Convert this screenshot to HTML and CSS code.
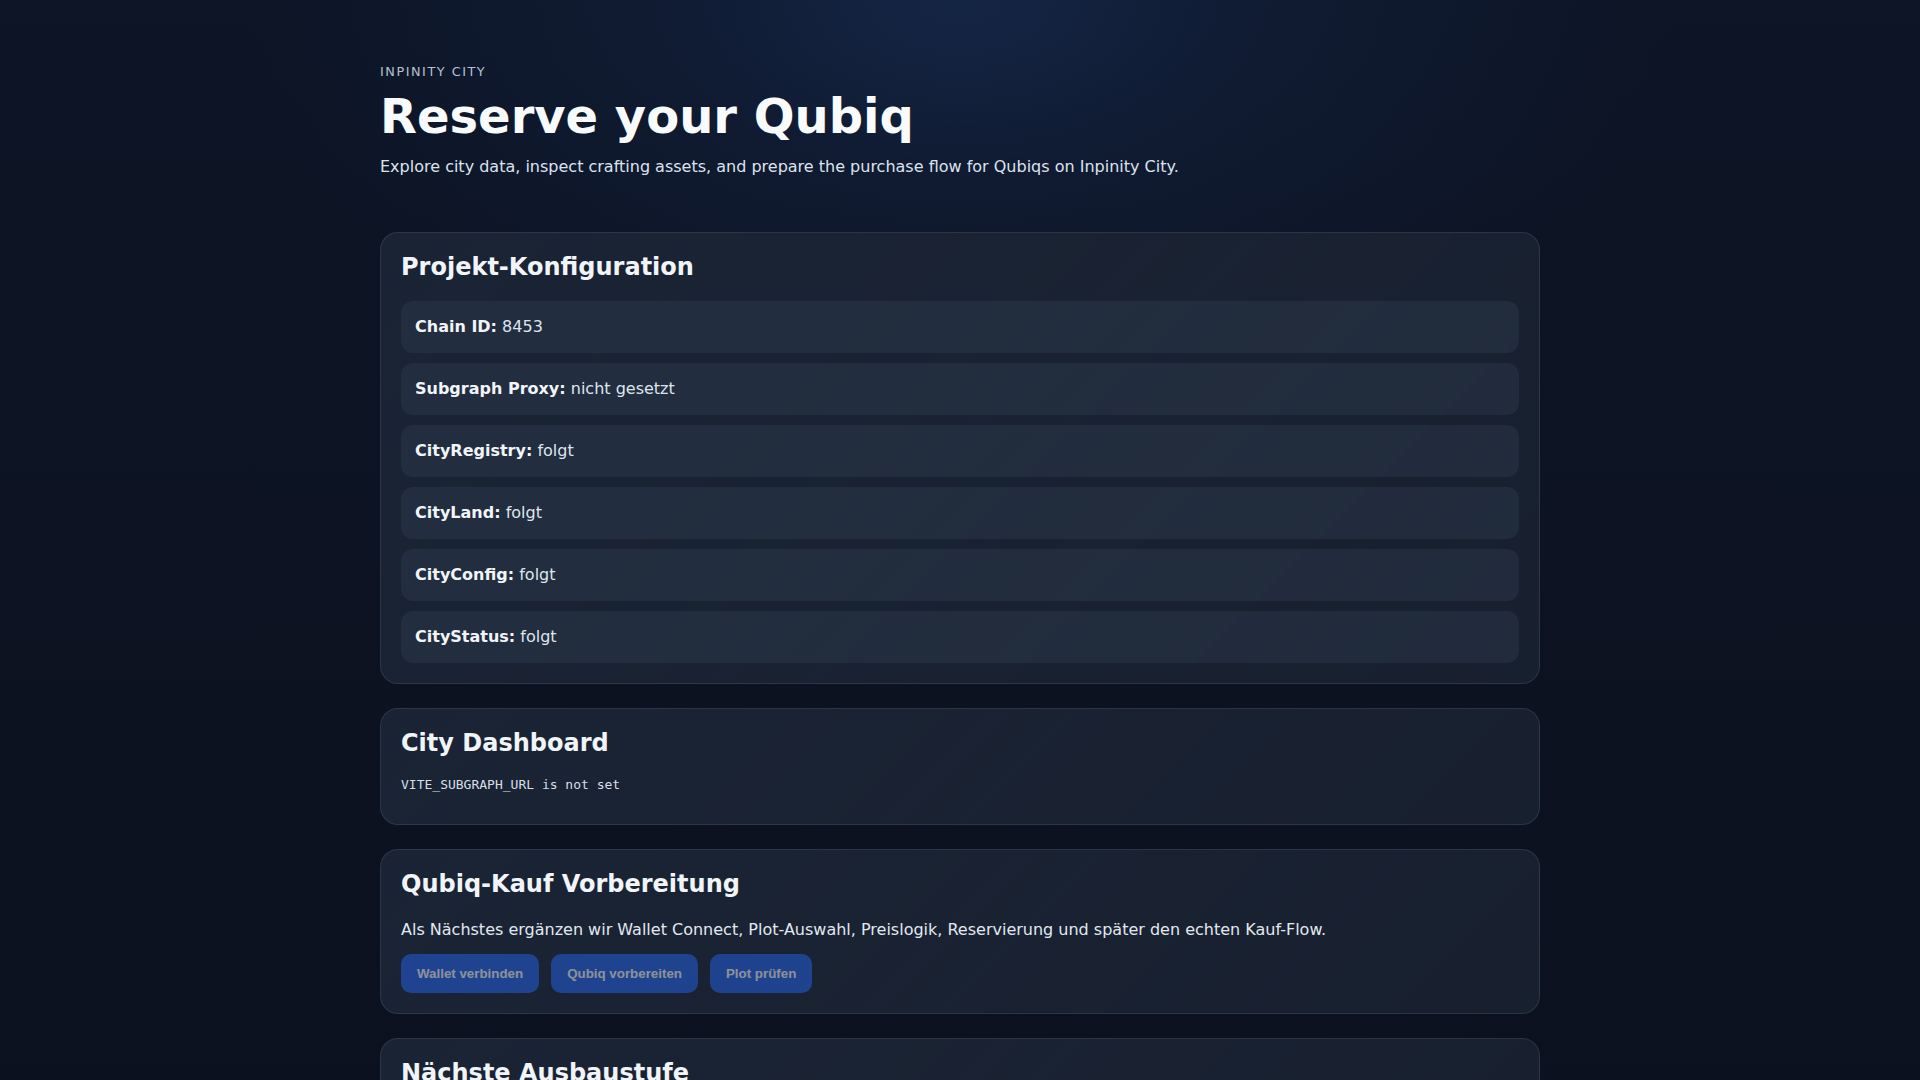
FILE: index.html
```html
<!DOCTYPE html>
<html lang="de">
<head>
<meta charset="utf-8">
<title>Inpinity City – Reserve your Qubiq</title>
<link rel="stylesheet" href="styles.css">
</head>
<body>
<main class="page">
  <header class="hero">
    <p class="eyebrow">INPINITY CITY</p>
    <h1 class="title">Reserve your Qubiq</h1>
    <p class="lead">Explore city data, inspect crafting assets, and prepare the purchase flow for Qubiqs on Inpinity City.</p>
  </header>

  <section class="card">
    <h2 class="card-title">Projekt-Konfiguration</h2>
    <ul class="config-list">
      <li class="config-row"><strong>Chain ID:</strong> 8453</li>
      <li class="config-row"><strong>Subgraph Proxy:</strong> nicht gesetzt</li>
      <li class="config-row"><strong>CityRegistry:</strong> folgt</li>
      <li class="config-row"><strong>CityLand:</strong> folgt</li>
      <li class="config-row"><strong>CityConfig:</strong> folgt</li>
      <li class="config-row"><strong>CityStatus:</strong> folgt</li>
    </ul>
  </section>

  <section class="card">
    <h2 class="card-title">City Dashboard</h2>
    <pre class="mono-note">VITE_SUBGRAPH_URL is not set</pre>
  </section>

  <section class="card">
    <h2 class="card-title">Qubiq-Kauf Vorbereitung</h2>
    <p class="card-text">Als Nächstes ergänzen wir Wallet Connect, Plot-Auswahl, Preislogik, Reservierung und später den echten Kauf-Flow.</p>
    <div class="actions">
      <button class="btn" disabled>Wallet verbinden</button>
      <button class="btn" disabled>Qubiq vorbereiten</button>
      <button class="btn" disabled>Plot prüfen</button>
    </div>
  </section>

  <section class="card">
    <h2 class="card-title">Nächste Ausbaustufe</h2>
    <p class="card-text">Plot-Karte, Crafting-Assets und Preisvorschau werden hier ergänzt.</p>
  </section>
</main>
</body>
</html>
```

FILE: styles.css
```css
* { box-sizing: border-box; }

html, body {
  margin: 0;
  padding: 0;
}

body {
  min-height: 100vh;
  font-family: "DejaVu Sans", Verdana, sans-serif;
  color: #e2e8f0;
  background-color: #0b111e;
  background-image:
    radial-gradient(ellipse 720px 420px at 50% 0%, rgba(22, 40, 74, 0.85) 0%, rgba(18, 32, 60, 0.5) 45%, rgba(11, 17, 30, 0) 100%),
    linear-gradient(180deg, #0d1526 0%, #0c1220 60%, #0b111e 100%);
  background-repeat: no-repeat;
}

.page {
  max-width: 1160px;
  margin: 0 auto;
  padding: 64px 0 48px;
  display: flex;
  flex-direction: column;
  gap: 24px;
}

.hero {
  margin-bottom: 29px;
}

.eyebrow {
  margin: 0 0 11px;
  font-size: 12.8px;
  letter-spacing: 0.12em;
  color: #b6c0d0;
}

.title {
  margin: 0;
  font-size: 48px;
  line-height: 1.1;
  font-weight: 700;
  color: #f8fafc;
}

.lead {
  margin: 12px 0 0;
  font-size: 16px;
  line-height: 1.5;
  color: #dbe3ee;
}

.card {
  border: 1px solid rgba(148, 163, 184, 0.16);
  border-radius: 18px;
  padding: 20px;
  background: linear-gradient(135deg, rgba(30, 41, 59, 0.55) 0%, rgba(24, 32, 47, 0.85) 100%);
  background-color: #161e2d;
}

.card-title {
  margin: 0 0 20px;
  font-size: 24px;
  font-weight: 700;
  color: #f1f5f9;
}

.config-list {
  list-style: none;
  margin: 0;
  padding: 0;
  display: flex;
  flex-direction: column;
  gap: 10px;
}

.config-row {
  padding: 14px;
  border-radius: 12px;
  background: rgba(51, 65, 85, 0.35);
  font-size: 16px;
  line-height: 24px;
  color: #dfe5ee;
}

.config-row strong {
  color: #f1f5f9;
}

.mono-note {
  margin: 0 0 12px;
  font-family: "DejaVu Sans Mono", monospace;
  font-size: 13px;
  color: #d8dee8;
}

.card-text {
  margin: 0 0 12px;
  font-size: 16px;
  line-height: 24px;
  color: #e2e8f0;
}

.actions {
  display: flex;
  gap: 12px;
}

.btn {
  font-family: "Liberation Sans", Arial, sans-serif;
  font-size: 13.333px;
  font-weight: 700;
  padding: 12px 16px;
  border: none;
  border-radius: 10px;
  background: #2563eb;
  color: #ffffff;
  opacity: 0.5;
  cursor: not-allowed;
}
```
